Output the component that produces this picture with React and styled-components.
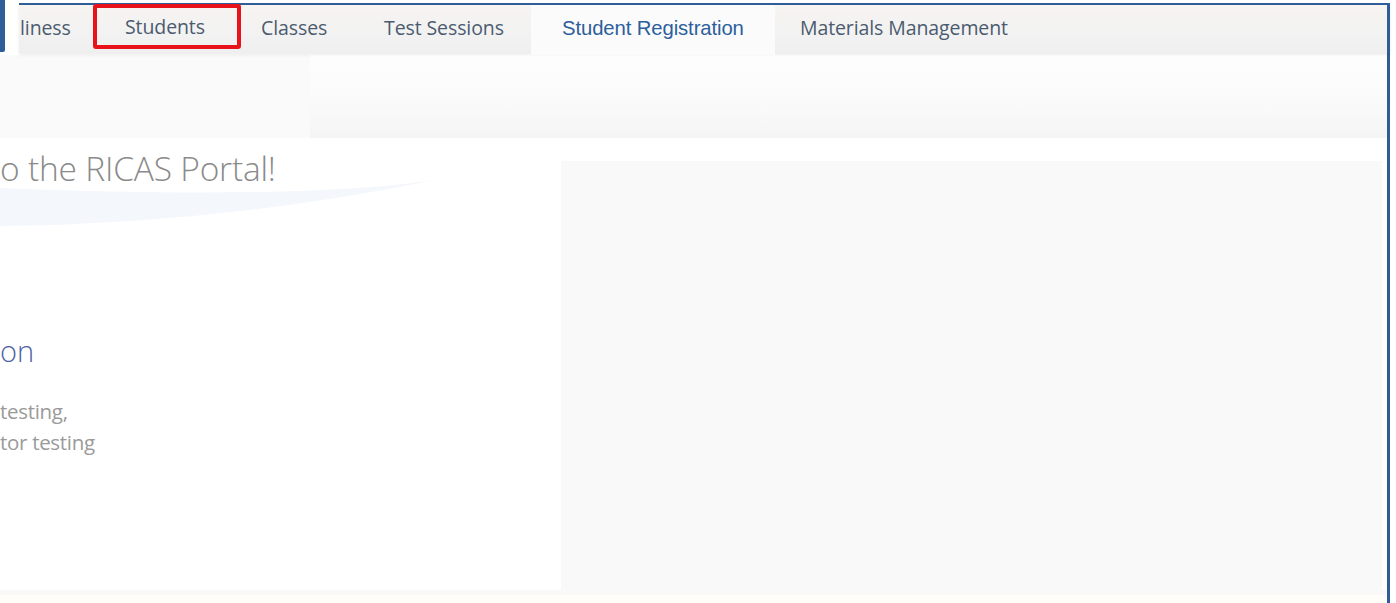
import React from "react";
import styled, { createGlobalStyle } from "styled-components";

const GlobalStyle = createGlobalStyle`
  html, body {
    margin: 0;
    padding: 0;
    background: #ffffff;
    overflow: hidden;
  }
  * { box-sizing: border-box; }
`;

const FRAME = "#2f5d97";

const Page = styled.div`
  width: 1396px;
  height: 603px;
  display: flex;
  flex-direction: column;
  background: #fff;
  font-family: "Open Sans", "Liberation Sans", sans-serif;
  overflow: hidden;
`;

const Header = styled.div`
  display: flex;
  height: 53px;
  flex-shrink: 0;
`;

const Cap = styled.div`
  display: flex;
  align-items: flex-start;
  width: 19px;
  flex-shrink: 0;
`;

const CapBar = styled.div`
  width: 5px;
  height: 52px;
  background: ${FRAME};
  border-radius: 0 0 2px 0;
`;

const CapNotch = styled.div`
  width: 14px;
  height: 46px;
  background: #fff;
`;

const Nav = styled.nav`
  flex: 1;
  margin: 3px 6px 0 0;
  display: flex;
  align-items: stretch;
  border-top: 2px solid ${FRAME};
  border-right: 3px solid ${FRAME};
  background: linear-gradient(180deg, #f7f4f1 0%, #f2f2f2 60%, #efefef 100%);
  box-shadow: 0 2px 3px rgba(0, 0, 0, 0.08);
  position: relative;
  z-index: 1;
`;

const Tab = styled.div`
  display: flex;
  align-items: center;
  flex-shrink: 0;
  width: ${(p) => (p.$width ? `${p.$width}px` : "auto")};
  padding-left: ${(p) => p.$padLeft}px;
  font-size: 19.5px;
  color: #4b5b6f;
  white-space: nowrap;
  letter-spacing: -0.1px;
  margin-top: -3px;
`;

const MarkedTab = styled(Tab)`
  border: 4px solid #e8121a;
  border-radius: 3px;
  margin: -1px 0 4px;
`;

const ActiveTab = styled(Tab)`
  background: #fbfbfb;
  color: #2c5f9c;
  font-family: "Liberation Sans", Arial, sans-serif;
  font-size: 20.3px;
  margin-top: 0;
  padding-bottom: 4px;
  margin-bottom: -2px;
`;

const Body = styled.div`
  flex: 1;
  margin-right: 6px;
  border-right: 3px solid ${FRAME};
  display: flex;
  flex-direction: column;
  position: relative;
`;

const Banner = styled.div`
  display: flex;
  height: 85px;
  flex-shrink: 0;
`;

const BannerLeft = styled.div`
  width: 310px;
  margin-top: 2px;
  background: #fafafa;
  border-radius: 0 3px 0 0;
`;

const BannerRight = styled.div`
  flex: 1;
  margin-top: 5px;
  background: linear-gradient(180deg, #fdfdfd 0%, #fbfbfb 45%, #f5f5f5 100%);
`;

const Content = styled.div`
  flex: 1;
  display: flex;
`;

const Intro = styled.div`
  width: 561px;
  position: relative;
  display: flex;
  flex-direction: column;
  padding-top: 8px;
`;

const Swoosh = styled.svg`
  position: absolute;
  left: 0;
  top: 36px;
  width: 440px;
  height: 60px;
  pointer-events: none;
`;

const Welcome = styled.h1`
  position: relative;
  margin: 0;
  font-weight: 300;
  font-size: 33.5px;
  line-height: 44px;
  color: #8a8a8a;
  letter-spacing: -0.2px;
`;

const SectionTitle = styled.h2`
  margin: 141px 0 0;
  font-weight: 300;
  font-size: 29px;
  line-height: 40px;
  color: #4d5fa6;
`;

const Blurb = styled.p`
  margin: 25px 0 0;
  font-weight: 400;
  font-size: 20.5px;
  line-height: 31px;
  color: #9a9a9a;
  letter-spacing: -0.3px;
`;

const SidePanel = styled.div`
  flex: 1;
  margin: 23px 5px 0 0;
  background: #f9f9f9;
`;

const Footer = styled.div`
  height: 13px;
  flex-shrink: 0;
  background: linear-gradient(180deg, #f9f9f9 0%, #f9f9f9 40%, #fefdf7 40%);
`;

export default function App() {
  return (
    <Page>
      <GlobalStyle />
      <Header>
        <Cap>
          <CapBar />
          <CapNotch />
        </Cap>
        <Nav>
          <Tab $width={74} $padLeft={1}>liness</Tab>
          <MarkedTab $width={148} $padLeft={28}>Students</MarkedTab>
          <Tab $width={117} $padLeft={20}>Classes</Tab>
          <Tab $width={173} $padLeft={26}>Test Sessions</Tab>
          <ActiveTab $width={244} $padLeft={31}>Student Registration</ActiveTab>
          <Tab $padLeft={25}>Materials Management</Tab>
        </Nav>
      </Header>
      <Body>
        <Banner>
          <BannerLeft />
          <BannerRight />
        </Banner>
        <Content>
          <Intro>
            <Swoosh viewBox="0 0 440 60" preserveAspectRatio="none">
              <path d="M0 14 L0 52 Q220 50 435 6 Q300 26 0 14 Z" fill="#f4f7fc" />
            </Swoosh>
            <Welcome>o the RICAS Portal!</Welcome>
            <SectionTitle>on</SectionTitle>
            <Blurb>
              testing,
              <br />
              tor testing
            </Blurb>
          </Intro>
          <SidePanel />
        </Content>
        <Footer />
      </Body>
    </Page>
  );
}
